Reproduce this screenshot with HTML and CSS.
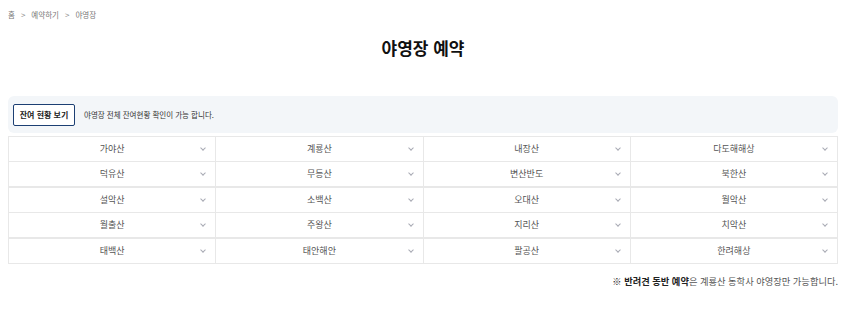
FILE: index.html
```html
<!DOCTYPE html>
<html lang="ko">
<head>
    <meta charset="UTF-8">
    <title>야영장 예약</title>
    <link rel="stylesheet" href="styles.css">
</head>
<body>
<div class="breadcrumb">
    <span>홈</span><span class="sep">&gt;</span><span>예약하기</span><span class="sep">&gt;</span><span>야영장</span>
</div>
<h1 class="page-title">야영장 예약</h1>
<div class="status-box">
    <div class="status-button">잔여 현황 보기</div>
    <div class="status-text">야영장 전체 잔여현황 확인이 가능 합니다.</div>
</div>
<div class="camp-grid">
    <div class="camp-row">
        <div class="camp-cell">가야산</div>
        <div class="camp-cell">계룡산</div>
        <div class="camp-cell">내장산</div>
        <div class="camp-cell">다도해해상</div>
    </div>
    <div class="camp-row group-end">
        <div class="camp-cell">덕유산</div>
        <div class="camp-cell">무등산</div>
        <div class="camp-cell">변산반도</div>
        <div class="camp-cell">북한산</div>
    </div>
    <div class="camp-row">
        <div class="camp-cell">설악산</div>
        <div class="camp-cell">소백산</div>
        <div class="camp-cell">오대산</div>
        <div class="camp-cell">월악산</div>
    </div>
    <div class="camp-row group-end">
        <div class="camp-cell">월출산</div>
        <div class="camp-cell">주왕산</div>
        <div class="camp-cell">지리산</div>
        <div class="camp-cell">치악산</div>
    </div>
    <div class="camp-row">
        <div class="camp-cell">태백산</div>
        <div class="camp-cell">태안해안</div>
        <div class="camp-cell">팔공산</div>
        <div class="camp-cell">한려해상</div>
    </div>
</div>
<p class="note"><b>※ 반려견 동반 예약</b>은 계룡산 동학사 야영장만 가능합니다.</p>
</body>
</html>
```

FILE: styles.css
```css
body {
    margin: 8px 26px 8px 8px;
    font-family: "Noto Sans CJK KR", "Noto Sans", sans-serif;
    color: #333333;
    background: #ffffff;
}

.breadcrumb {
    display: flex;
    align-items: center;
    gap: 6px;
    height: 12px;
    font-size: 7.5px;
    color: #777777;
}

.breadcrumb .sep {
    font-size: 8px;
    color: #888888;
}

.page-title {
    margin: 17px 0 0 0;
    height: 22px;
    line-height: 22px;
    text-align: center;
    font-size: 17px;
    font-weight: bold;
    color: #111111;
}

.status-box {
    display: flex;
    align-items: center;
    gap: 9px;
    margin-top: 37px;
    height: 37px;
    padding: 0 5px;
    background: #f3f6f9;
    border-radius: 6px;
}

.status-button {
    width: 60px;
    height: 20px;
    line-height: 20px;
    text-align: center;
    border: 1px solid #1c3f73;
    border-radius: 2px;
    background: #ffffff;
    font-size: 8px;
    font-weight: bold;
    color: #222222;
}

.status-text {
    font-size: 7.5px;
    color: #333333;
}

.camp-grid {
    margin-top: 3px;
    border-top: 1px solid #e8e8e8;
    border-left: 1px solid #e8e8e8;
}

.camp-row {
    display: grid;
    grid-template-columns: repeat(4, 1fr);
    border-bottom: 1px solid #e8e8e8;
}

.camp-row.group-end {
    border-bottom: 2px solid #e8e8e8;
}

.camp-cell {
    position: relative;
    height: 24px;
    line-height: 24px;
    text-align: center;
    font-size: 9px;
    color: #555555;
    border-right: 1px solid #e8e8e8;
}

.camp-cell::after {
    content: "";
    position: absolute;
    right: 10px;
    top: 9px;
    width: 3px;
    height: 3px;
    border-right: 1px solid #a8aab4;
    border-bottom: 1px solid #a8aab4;
    transform: rotate(45deg);
}

.note {
    margin: 10px 0 0 0;
    text-align: right;
    font-size: 9.25px;
    color: #555555;
}

.note b {
    color: #222222;
}
```
